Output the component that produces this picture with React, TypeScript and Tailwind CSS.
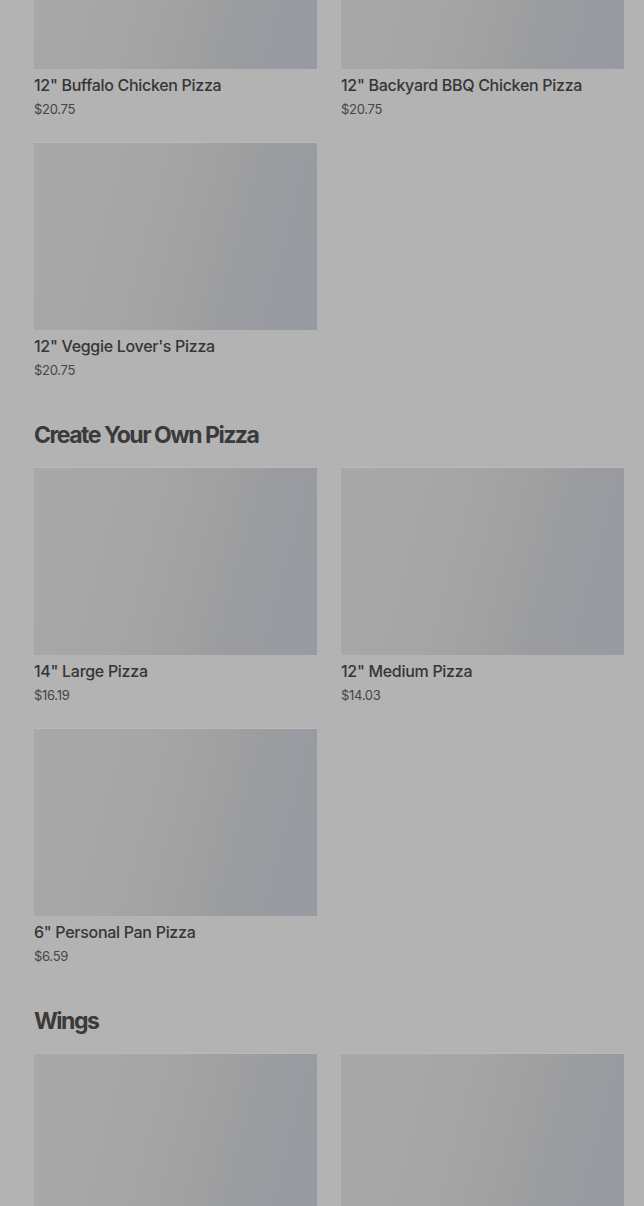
type Item = { name: string; price: string }

const sections: { title?: string; items: Item[] }[] = [
  {
    items: [
      { name: '12" Buffalo Chicken Pizza', price: '$20.75' },
      { name: '12" Backyard BBQ Chicken Pizza', price: '$20.75' },
      { name: '12" Veggie Lover\'s Pizza', price: '$20.75' },
    ],
  },
  {
    title: 'Create Your Own Pizza',
    items: [
      { name: '14" Large Pizza', price: '$16.19' },
      { name: '12" Medium Pizza', price: '$14.03' },
      { name: '6" Personal Pan Pizza', price: '$6.59' },
    ],
  },
  {
    title: 'Wings',
    // names sit below the fold
    items: [
      { name: '', price: '' },
      { name: '', price: '' },
    ],
  },
]

export default function App() {
  return (
    <div className="h-[1206px] overflow-hidden bg-[#b3b3b3] font-['Inter',sans-serif]">
      <div className="-mt-[119px] pl-[34px] pr-[20px]">
        {sections.map((s, i) => (
          <section key={i} className={i > 0 ? 'mt-[39px]' : ''}>
            {s.title && (
              <h2 className="mb-4 text-[23px] leading-8 font-bold tracking-[-1.5px] text-[#3a3a3a]">
                {s.title}
              </h2>
            )}
            <div className="grid grid-cols-2 gap-x-6 gap-y-[23px]">
              {s.items.map((it, j) => (
                <MenuCard key={j} item={it} />
              ))}
            </div>
          </section>
        ))}
      </div>
    </div>
  )
}

function MenuCard({ item }: { item: Item }) {
  return (
    <div>
      <div className="h-[188px] border-t border-[#b9b9b9] bg-[linear-gradient(105deg,#a8a8a8_0%,#a6a6a6_35%,#a0a0a0_60%,#9a9ca0_72%,#979aa1_100%)]" />
      {item.name && (
        <>
          <p className="mt-1 text-[16px] leading-6 font-[450] tracking-[-0.3px] text-[#363636]">{item.name}</p>
          <p className="mt-[2px] text-[13px] leading-5 tracking-[-0.3px] text-[#454545]">{item.price}</p>
        </>
      )}
    </div>
  )
}
